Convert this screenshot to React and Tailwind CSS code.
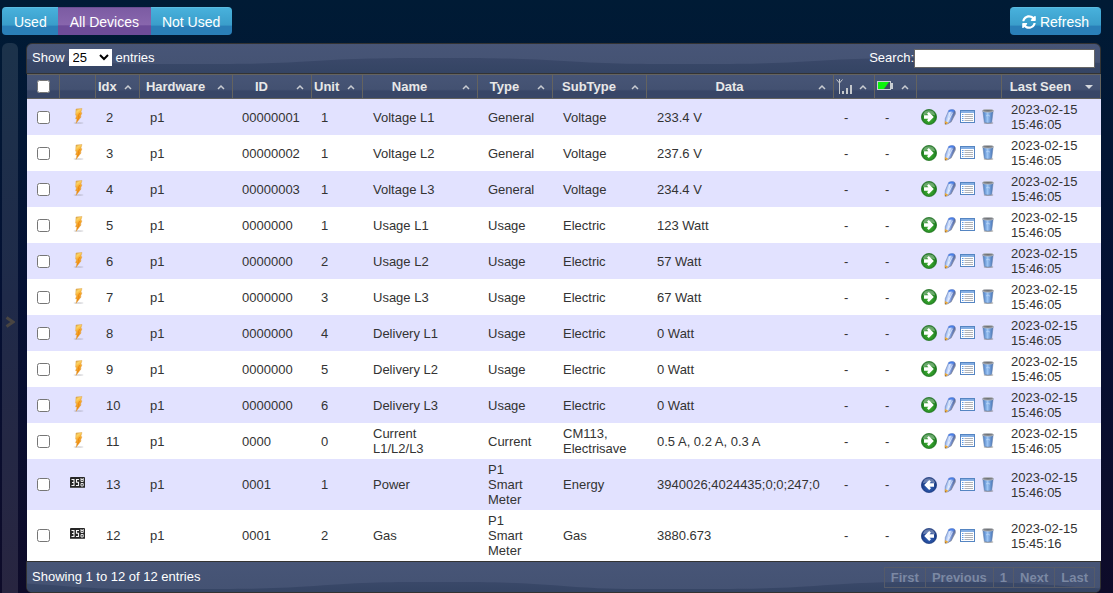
import React from "react";
import { FaSyncAlt } from "react-icons/fa";

const LAST = "2023-02-15\n15:46:05";

const devices = [
  { idx: 2, id: "00000001", unit: 1, name: "Voltage L1", type: "General", sub: "Voltage", data: "233.4 V", seen: LAST },
  { idx: 3, id: "00000002", unit: 1, name: "Voltage L2", type: "General", sub: "Voltage", data: "237.6 V", seen: LAST },
  { idx: 4, id: "00000003", unit: 1, name: "Voltage L3", type: "General", sub: "Voltage", data: "234.4 V", seen: LAST },
  { idx: 5, id: "0000000", unit: 1, name: "Usage L1", type: "Usage", sub: "Electric", data: "123 Watt", seen: LAST },
  { idx: 6, id: "0000000", unit: 2, name: "Usage L2", type: "Usage", sub: "Electric", data: "57 Watt", seen: LAST },
  { idx: 7, id: "0000000", unit: 3, name: "Usage L3", type: "Usage", sub: "Electric", data: "67 Watt", seen: LAST },
  { idx: 8, id: "0000000", unit: 4, name: "Delivery L1", type: "Usage", sub: "Electric", data: "0 Watt", seen: LAST },
  { idx: 9, id: "0000000", unit: 5, name: "Delivery L2", type: "Usage", sub: "Electric", data: "0 Watt", seen: LAST },
  { idx: 10, id: "0000000", unit: 6, name: "Delivery L3", type: "Usage", sub: "Electric", data: "0 Watt", seen: LAST },
  { idx: 11, id: "0000", unit: 0, name: "Current\nL1/L2/L3", type: "Current", sub: "CM113,\nElectrisave", data: "0.5 A, 0.2 A, 0.3 A", seen: LAST },
  { idx: 13, id: "0001", unit: 1, name: "Power", type: "P1\nSmart\nMeter", sub: "Energy", data: "3940026;4024435;0;0;247;0", seen: LAST, used: true },
  { idx: 12, id: "0001", unit: 2, name: "Gas", type: "P1\nSmart\nMeter", sub: "Gas", data: "3880.673", seen: "2023-02-15\n15:45:16", used: true },
];

function Gradients() {
  return (
    <svg className="absolute size-0" aria-hidden="true">
      <defs>
        <linearGradient id="bolt" x1="0" y1="0" x2="0.3" y2="1">
          <stop offset="0" stopColor="#cf9a45" />
          <stop offset="0.25" stopColor="#fcd465" />
          <stop offset="0.5" stopColor="#f9a828" />
          <stop offset="1" stopColor="#ee8c14" />
        </linearGradient>
        <radialGradient id="green" cx="0.5" cy="0.65" r="0.6">
          <stop offset="0" stopColor="#43b534" />
          <stop offset="1" stopColor="#14701a" />
        </radialGradient>
        <radialGradient id="blue" cx="0.5" cy="0.65" r="0.6">
          <stop offset="0" stopColor="#3465bd" />
          <stop offset="1" stopColor="#15337a" />
        </radialGradient>
        <linearGradient id="pen" x1="0.1" y1="0.3" x2="0.9" y2="0.6">
          <stop offset="0.1" stopColor="#8fb0ea" />
          <stop offset="0.4" stopColor="#dfeaff" />
          <stop offset="0.6" stopColor="#8eacea" />
          <stop offset="0.9" stopColor="#4a5f98" />
        </linearGradient>
        <linearGradient id="bin" x1="0" y1="0" x2="1" y2="0">
          <stop offset="0" stopColor="#4577be" />
          <stop offset="0.45" stopColor="#9cc5f4" />
          <stop offset="1" stopColor="#3f6db2" />
        </linearGradient>
        <linearGradient id="wave-fill" x1="0" y1="0" x2="0" y2="1">
          <stop offset="0" stopColor="#3a4869" />
          <stop offset="1" stopColor="#344463" />
        </linearGradient>
        <pattern id="wave-top" width="500" height="30" patternUnits="userSpaceOnUse" x="287">
          <path d="M0 17C50 14 75 14 125 14S200 14 250 17S325 20 375 20S450 20 500 17V30H0Z" fill="url(#wave-fill)" />
        </pattern>
        <pattern id="wave-bottom" width="500" height="32" patternUnits="userSpaceOnUse" x="287">
          <path d="M0 24C50 20 75 20 125 20S200 20 250 24S325 27 375 27S450 27 500 24V32H0Z" fill="url(#wave-fill)" />
        </pattern>
      </defs>
    </svg>
  );
}

function Wave({ fill }) {
  return (
    <svg className="absolute inset-0 size-full" aria-hidden="true">
      <rect width="100%" height="100%" fill={fill} />
    </svg>
  );
}

function BoltIcon() {
  return (
    <svg width="16" height="16" viewBox="0 0 16 16" aria-hidden="true">
      <ellipse cx="8.500" cy="15" rx="5" ry="0.700" fill="#8c8c98" opacity="0.4" />
      <path d="M6 1L12 0.500L10.800 4.500L12 4.800L10.400 8.400L11.200 8.700L6 15.400L7 11L5.600 10.800L6.600 7.400L5.600 7.200Z" fill="url(#bolt)" stroke="#d9973c" strokeWidth="0.400" />
      <path d="M9.600 5L8.200 8.400L9.200 8.600L7.400 12.400" fill="none" stroke="#e58410" strokeWidth="0.700" />
    </svg>
  );
}

function CounterIcon() {
  return (
    <svg width="16" height="12" viewBox="0 0 16 12" aria-hidden="true">
      <rect width="15" height="11" rx="1" fill="#262626" />
      <path d="M1 10.500H14" stroke="#555" />
      <g fill="none" stroke="#f4f4f4" strokeWidth="1.100">
        <path d="M1.500 2.500H4V8.500H1.500M2 5.500H4" />
        <path d="M9 2.500H6.500V5.200H8.500V8.500H6" />
        <path d="M11 1V4.500H13.200V1M11 2.500H13.200M11 6.500H13.200V9H11Z" strokeWidth="0.900" />
      </g>
    </svg>
  );
}

function ArrowIcon({ back }) {
  return (
    <svg width="16" height="16" viewBox="0 0 16 16" aria-hidden="true">
      <circle cx="8" cy="8" r="7.600" fill={back ? "url(#blue)" : "url(#green)"} stroke={back ? "#1b3a7c" : "#1d701d"} strokeWidth="0.700" />
      <path d="M1.800 6.500A6.300 6.300 0 0 1 14.200 6.500Q8 3.500 1.800 6.500Z" fill="#fff" opacity="0.350" />
      {back ? (
        <path d="M13 6.300V9.700H8.600L10 11.200L8.200 13L3.200 8L8.200 3L10 4.800L8.600 6.300Z" fill="#fff" />
      ) : (
        <path d="M3 6.300V9.700H7.400L6 11.200L7.800 13L12.800 8L7.800 3L6 4.800L7.400 6.300Z" fill="#fff" />
      )}
    </svg>
  );
}

function PencilIcon() {
  return (
    <svg width="12" height="16" viewBox="0 0 12 16" aria-hidden="true">
      <path d="M3 15.600L7.500 13L11.800 5L11.500 2L8 9Z" fill="#6f7480" opacity="0.700" />
      <path d="M4.800 1.300Q7.500 -0.300 10.300 1Q11.600 2.200 10.900 4.200L7 12.600L2.500 15.200L1 14.500L1.300 9.500Z" fill="url(#pen)" stroke="#7286b8" strokeWidth="0.600" />
      <path d="M4.800 1.300Q7.500 -0.300 10.300 1L10 2.800Q7 1.800 4.300 3.200Z" fill="#4a7fe6" />
      <path d="M4.500 11.500L8.500 3.800" stroke="#fff" strokeWidth="1" opacity="0.600" />
      <path d="M1 12L4.400 13.700L2.300 15.300L0.800 15Z" fill="#e8a83a" />
      <path d="M1 14.200L2.300 14.900L0.900 15.600Z" fill="#6b4018" />
    </svg>
  );
}

function ListIcon() {
  return (
    <svg width="15" height="16" viewBox="0 0 15 16" aria-hidden="true">
      <rect x="0.500" y="1.500" width="14" height="12" fill="#fff" stroke="#5585c2" />
      <rect x="1" y="2" width="13" height="2" fill="#84aee3" />
      <path d="M2 5.500H3.500M2 7.500H3.500M2 9.500H3.500M2 11.500H3.500" stroke="#5b9bea" />
      <path d="M4.500 5.500H13M4.500 7.500H13M4.500 9.500H13M4.500 11.500H13" stroke="#b0b3b8" />
    </svg>
  );
}

function TrashIcon() {
  return (
    <svg width="12" height="16" viewBox="0 0 12 16" aria-hidden="true">
      <ellipse cx="6.500" cy="14" rx="4.800" ry="1.100" fill="#666" opacity="0.500" />
      <path d="M0.900 2L2.300 13.200Q6 15 9.700 13.200L11.100 2Z" fill="url(#bin)" stroke="#6f88ac" strokeWidth="0.600" />
      <ellipse cx="6" cy="1.800" rx="5.500" ry="1.300" fill="#6f7276" stroke="#b4b7bb" strokeWidth="0.900" />
      <path d="M4 7L6 6L8 7.200" stroke="#cfe2fb" strokeWidth="0.600" fill="none" />
    </svg>
  );
}

function SignalIcon() {
  return (
    <svg width="16" height="16" viewBox="0 0 16 16" shapeRendering="crispEdges" aria-hidden="true">
      <path d="M3.500 0V15M0.500 0.500L3.500 4L6.500 0.500" fill="none" stroke="#c4c8cc" shapeRendering="auto" />
      <path d="M6 12H8V15H6ZM10 9H12V15H10ZM14 6H16V15H14Z" fill="#c4c8cc" />
    </svg>
  );
}

function BatteryIcon() {
  return (
    <svg width="16" height="12" viewBox="0 0 16 12" aria-hidden="true">
      <rect x="0.500" y="0.500" width="13" height="8" fill="#3c4763" stroke="#c9ced3" />
      <path d="M1 1H12L7 8H1Z" fill="#0cf20c" />
      <rect x="14" y="2" width="2" height="6" fill="#c9ced3" />
    </svg>
  );
}

function SortMark({ down }) {
  return (
    <svg className="shrink-0" width="8" height="6" viewBox="0 0 8 6" aria-hidden="true">
      {down ? (
        <path d="M0 1H8L4 5Z" fill="#d5d8de" />
      ) : (
        <path d="M1 5L4 2L7 5" fill="none" stroke="#c9ccd2" strokeWidth="1.500" />
      )}
    </svg>
  );
}

const headCell =
  "h-[25px] border-y border-r border-[#64635f] bg-linear-to-b from-[#475576] from-0% via-[#435171] via-62% to-[#384667] to-70% p-0 text-[13px] font-bold text-[#e8e8e8]";

function Head({ children, label, down }) {
  return (
    <th className={headCell} scope="col">
      <button type="button" aria-label={label} className="flex w-full items-center whitespace-nowrap pr-[7px] pl-[2px]">
        <span className="flex min-w-0 flex-1 justify-start">
          <span className={label ? "" : "flex-1 text-center"}>{children}</span>
        </span>
        <span className="flex pl-2">
          <SortMark down={down} />
        </span>
      </button>
    </th>
  );
}

const blueButton =
  "h-7 px-3 text-sm text-white bg-linear-to-b from-[#48b1dc] from-0% via-[#3a9dca] via-64% to-[#2a7fb8] to-66% border-t border-[#5bbbe0]";
const pageButton = "-ml-px h-[21px] border border-[#555a68] px-[6px] text-[13px] font-bold text-[#7b88a3]";

export default function App() {
  return (
    <div className="flex min-h-screen flex-col bg-linear-to-b from-[#001b35] via-[#041033] to-[#0e0b29] pt-[7px] pr-3 pl-[2px] font-['Liberation_Sans',Arial,sans-serif] text-[13px] text-[#333]">
      <Gradients />
      <header className="mb-2 flex justify-between">
        <div className="flex overflow-hidden rounded">
          <button type="button" className={blueButton}>Used</button>
          <button
            type="button"
            className="z-10 -mx-px h-7 border-t border-[#6a4e91] bg-linear-to-b from-[#7c5ca3] from-0% via-[#8866ad] via-62% to-[#6e4c99] to-66% px-3 text-sm text-white"
          >
            All Devices
          </button>
          <button type="button" className={blueButton}>Not Used</button>
        </div>
        <button type="button" className={`${blueButton} flex items-center gap-1 rounded`}>
          <FaSyncAlt size={14} aria-hidden="true" />
          Refresh
        </button>
      </header>

      <div className="flex flex-1 gap-2">
        <aside className="flex w-4 shrink-0 items-center justify-center rounded-t-md bg-[#ffffff1c] pt-2">
          <svg width="10" height="12" viewBox="0 0 10 12" aria-hidden="true">
            <path d="M1.500 1.500L8 6L1.500 10.500" fill="none" stroke="#494542" strokeWidth="3" />
          </svg>
        </aside>

        <main className="min-w-0 flex-1">
          <div className="relative h-[31px] overflow-hidden rounded-t-md border border-[#333] bg-linear-to-b from-[#475577] to-[#445272]">
            <Wave fill="url(#wave-top)" />
            <div className="relative flex items-start justify-between pt-[5px] pr-[5px] pl-[5px] leading-[18px] text-white">
              <label className="flex items-start gap-1">
                Show
                <select defaultValue="25" className="h-[17px] w-[43px] bg-white text-[13px] text-black">
                  <option>10</option>
                  <option>25</option>
                  <option>100</option>
                </select>
                entries
              </label>
              <label className="flex items-start">
                Search:
                <input type="text" className="h-[19px] w-[181px] border border-[#666] bg-white px-1 text-black" />
              </label>
            </div>
          </div>

          <div className="pl-px">
            <table className="w-full table-fixed border-separate border-spacing-0 text-left">
              <colgroup>
                <col className="w-[33px]" />
                <col className="w-[36px]" />
                <col className="w-[44px]" />
                <col className="w-[93px]" />
                <col className="w-[79px]" />
                <col className="w-[51px]" />
                <col className="w-[115px]" />
                <col className="w-[75px]" />
                <col className="w-[94px]" />
                <col />
                <col className="w-[41px]" />
                <col className="w-[42px]" />
                <col className="w-[85px]" />
                <col className="w-[99px]" />
              </colgroup>
              <thead>
                <tr>
                  <th className={headCell} scope="col">
                    <input type="checkbox" aria-label="Select all devices" className="mx-auto block size-[13px]" />
                  </th>
                  <th className={headCell} scope="col" aria-label="Icon" />
                  <Head>Idx</Head>
                  <Head>Hardware</Head>
                  <Head>ID</Head>
                  <Head>Unit</Head>
                  <Head>Name</Head>
                  <Head>Type</Head>
                  <Head>SubType</Head>
                  <Head>Data</Head>
                  <Head label="Signal level"><SignalIcon /></Head>
                  <Head label="Battery level"><BatteryIcon /></Head>
                  <th className={headCell} scope="col" aria-label="Actions" />
                  <Head down>Last Seen</Head>
                </tr>
              </thead>
              <tbody className="leading-[15px]">
                {devices.map((d) => (
                  <tr key={d.idx} className="bg-white odd:bg-[#e2e2ff]">
                    <td>
                      <input type="checkbox" aria-label={`Select ${d.name}`} className="mx-auto block size-[13px]" />
                    </td>
                    <td>
                      <span className="flex justify-center pb-[3px]">{d.used ? <CounterIcon /> : <BoltIcon />}</span>
                    </td>
                    <td className="px-[10px]">{d.idx}</td>
                    <td className="px-[10px]">p1</td>
                    <td className="pl-[9px]">{d.id}</td>
                    <td className="pl-[9px]">{d.unit}</td>
                    <td className="whitespace-pre-line px-[10px]">{d.name}</td>
                    <td className="whitespace-pre-line px-[10px] py-[3px]">{d.type}</td>
                    <td className="whitespace-pre-line pl-[10px]">{d.sub}</td>
                    <td className="px-[10px]">{d.data}</td>
                    <td className="px-[10px]">-</td>
                    <td className="px-[10px]">-</td>
                    <td>
                      <div className="flex items-center pl-1">
                        <button type="button" aria-label={d.used ? "Set unused" : "Add device"}><ArrowIcon back={d.used} /></button>
                        <button type="button" aria-label="Rename device" className="ml-[7px]"><PencilIcon /></button>
                        <button type="button" aria-label="Log" className="ml-1"><ListIcon /></button>
                        <button type="button" aria-label="Delete device" className="ml-[7px]"><TrashIcon /></button>
                      </div>
                    </td>
                    <td className="whitespace-pre-line py-[3px] pl-[9px]">{d.seen}</td>
                  </tr>
                ))}
              </tbody>
            </table>
          </div>

          <div className="relative h-8 overflow-hidden rounded-b-md border border-[#333] bg-linear-to-b from-[#475577] to-[#445272]">
            <Wave fill="url(#wave-bottom)" />
            <div className="relative flex h-full items-center justify-between px-[5px] text-white">
              <p>Showing 1 to 12 of 12 entries</p>
              <nav className="flex" aria-label="Pages">
                <button type="button" className={pageButton}>First</button>
                <button type="button" className={pageButton}>Previous</button>
                <button type="button" className={pageButton}>1</button>
                <button type="button" className={pageButton}>Next</button>
                <button type="button" className={pageButton}>Last</button>
              </nav>
            </div>
          </div>
        </main>
      </div>
    </div>
  );
}
